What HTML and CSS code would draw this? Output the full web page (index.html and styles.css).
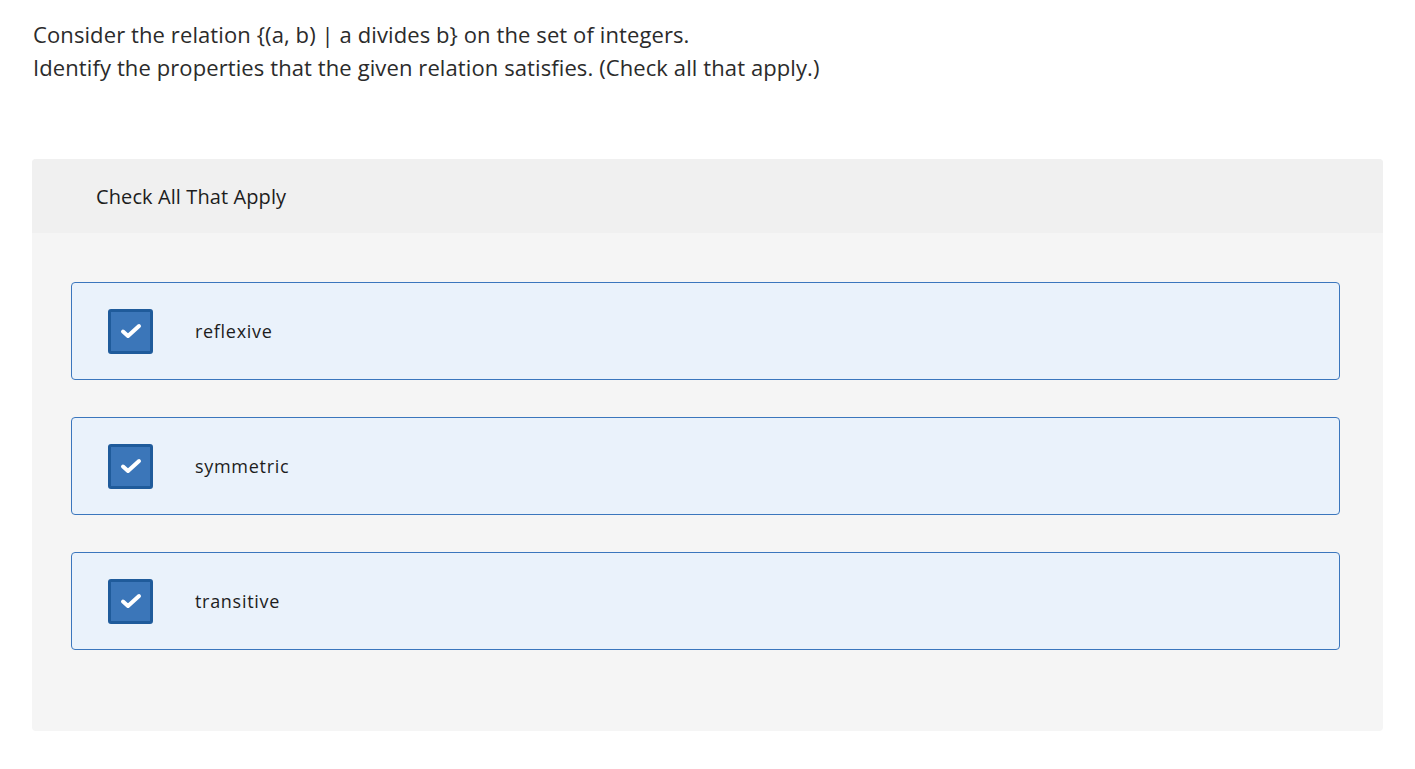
FILE: index.html
```html
<!DOCTYPE html>
<html>
<head>
<meta charset="utf-8">
<link rel="stylesheet" href="styles.css">
</head>
<body>
<div class="page">
  <div class="question">
    <p>Consider the relation {(a, b) | a divides b} on the set of integers.</p>
    <p>Identify the properties that the given relation satisfies. (Check all that apply.)</p>
  </div>
  <div class="panel">
    <div class="panel-head">Check All That Apply</div>
    <div class="panel-body">
      <label class="option">
        <span class="box"><svg viewBox="0 0 22 16" width="22" height="16"><path d="M3 8.5 L8 13 L19 3" fill="none" stroke="#fff" stroke-width="4" stroke-linecap="round" stroke-linejoin="round"/></svg></span>
        <span class="text">reflexive</span>
      </label>
      <label class="option">
        <span class="box"><svg viewBox="0 0 22 16" width="22" height="16"><path d="M3 8.5 L8 13 L19 3" fill="none" stroke="#fff" stroke-width="4" stroke-linecap="round" stroke-linejoin="round"/></svg></span>
        <span class="text">symmetric</span>
      </label>
      <label class="option">
        <span class="box"><svg viewBox="0 0 22 16" width="22" height="16"><path d="M3 8.5 L8 13 L19 3" fill="none" stroke="#fff" stroke-width="4" stroke-linecap="round" stroke-linejoin="round"/></svg></span>
        <span class="text">transitive</span>
      </label>
    </div>
  </div>
</div>
</body>
</html>
```
FILE: styles.css
```css
html, body {
  margin: 0;
  padding: 0;
  background: #fff;
}
body {
  font-family: "Open Sans", "Lato", sans-serif;
  color: #222;
}
.page {
  padding: 18px 32px 0 32px;
}
.question {
  padding-left: 1px;
  font-size: 22px;
  line-height: 33px;
  letter-spacing: 0.1px;
  color: #2b2b2b;
}
.question p {
  margin: 0;
}
.panel {
  margin-top: 75px;
  width: 1351px;
  background: #f5f5f5;
  border-radius: 4px;
  overflow: hidden;
}
.panel-head {
  height: 74px;
  background: #f0f0f0;
  display: flex;
  align-items: center;
  padding-left: 64px;
  font-size: 20px;
  letter-spacing: 0.1px;
  color: #1d1d1d;
}
.panel-body {
  padding: 49px 43px 81px 39px;
  display: flex;
  flex-direction: column;
  gap: 37px;
}
.option {
  height: 96px;
  border: 1px solid #3b76bd;
  border-radius: 4px;
  background: #eaf2fb;
  display: flex;
  align-items: center;
  padding-left: 36px;
}
.box {
  width: 39px;
  height: 39px;
  background: #3b76b9;
  border: 3px solid #1f5b9b;
  border-radius: 3px;
  display: flex;
  align-items: center;
  justify-content: center;
}
.text {
  margin-left: 42px;
  font-size: 18px;
  letter-spacing: 0.7px;
  color: #1d1d1d;
}
```
